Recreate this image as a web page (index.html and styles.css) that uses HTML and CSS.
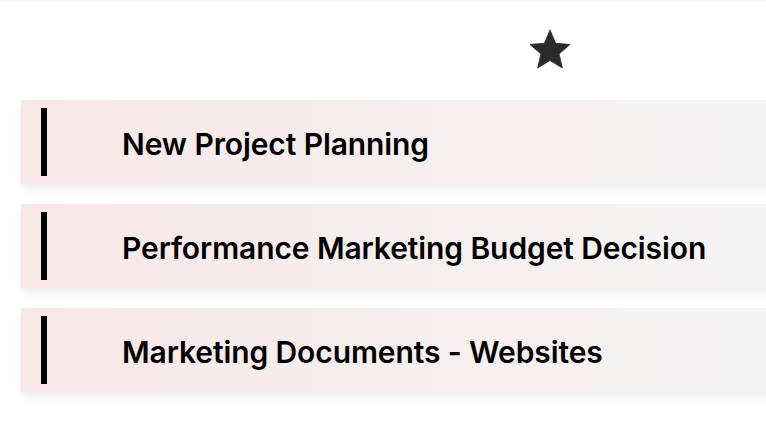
FILE: index.html
```html
<!DOCTYPE html>
<html>
<head>
<meta charset="utf-8">
<link rel="stylesheet" href="styles.css">
</head>
<body>
<div class="topline"></div>
<header class="head">
  <svg class="star" viewBox="0 0 24 24" width="48" height="48" aria-hidden="true">
    <path d="M12 17.27L18.18 21l-1.64-7.03L22 9.24l-7.19-.61L12 2 9.19 8.63 2 9.24l5.46 4.73L5.82 21z" fill="#2b2b2b" stroke="#2b2b2b" stroke-width="0.4" stroke-linejoin="round"/>
  </svg>
</header>
<main class="list">
  <div class="card"><span class="bar"></span><span class="title">New Project Planning</span></div>
  <div class="card"><span class="bar"></span><span class="title">Performance Marketing Budget Decision</span></div>
  <div class="card"><span class="bar"></span><span class="title">Marketing Documents - Websites</span></div>
</main>
</body>
</html>
```
FILE: styles.css
```css
html, body {
  margin: 0;
  padding: 0;
  background: #ffffff;
  overflow: hidden;
  width: 766px;
  height: 426px;
}
body {
  font-family: "Inter", "Noto Sans", sans-serif;
  color: #000;
}
.topline {
  height: 3px;
  background: linear-gradient(to bottom, #f6f6f6, #ffffff);
}
.head {
  height: 97px;
  display: flex;
  align-items: flex-start;
  padding-left: 526px;
  box-sizing: border-box;
  padding-top: 23px;
}
.star {
  display: block;
}
.list {
  padding-left: 21px;
  display: flex;
  flex-direction: column;
  gap: 20px;
}
.card {
  width: 780px;
  height: 84px;
  display: flex;
  align-items: center;
  background: linear-gradient(to right, #f9e7e7 0%, #f6eeee 45%, #f5f5f5 100%);
  box-shadow: 0 4px 8px rgba(0, 0, 0, 0.07);
}
.bar {
  width: 6px;
  height: 68px;
  background: #000;
  margin-left: 20px;
  flex: none;
}
.title {
  margin-left: 75px;
  padding-top: 4px;
  font-size: 30px;
  font-weight: 560;
  letter-spacing: -0.1px;
  white-space: nowrap;
}
```
